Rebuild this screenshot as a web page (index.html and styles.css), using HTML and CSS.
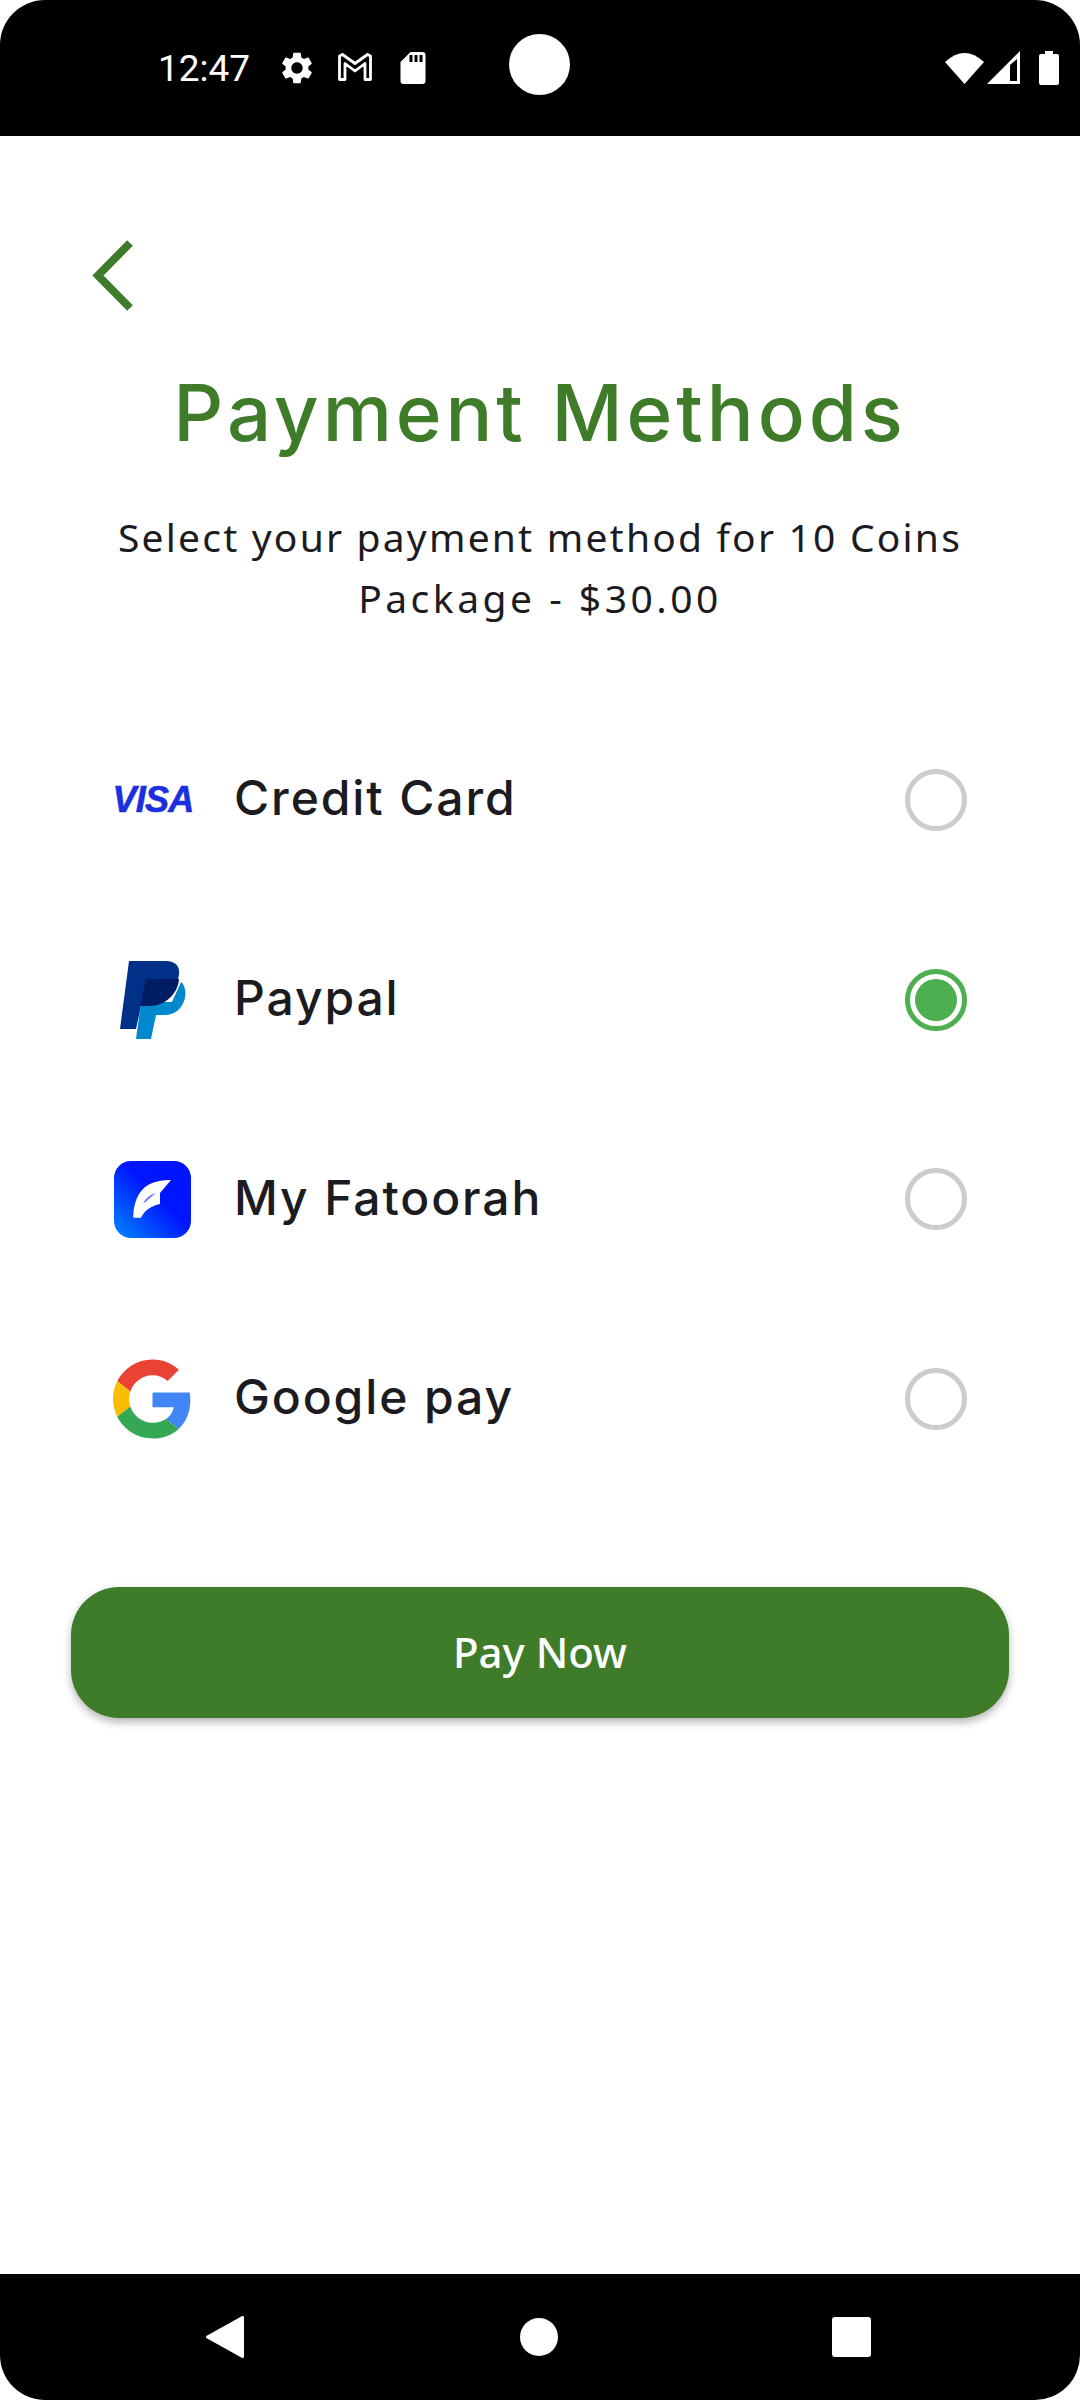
FILE: index.html
```html
<!DOCTYPE html>
<html lang="en">
<head>
<meta charset="utf-8">
<title>Payment Methods</title>
<link rel="stylesheet" href="styles.css">
</head>
<body>
<div class="screen">
  <header class="status">
    <span class="time">12:47</span>
    <svg class="ic-gear" viewBox="0 0 24 24"><path fill="#fff" d="M19.14 12.94c.04-.3.06-.61.06-.94 0-.32-.02-.64-.07-.94l2.03-1.58c.18-.14.23-.41.12-.61l-1.92-3.32c-.12-.22-.37-.29-.59-.22l-2.39.96c-.5-.38-1.03-.7-1.62-.94l-.36-2.54c-.04-.24-.24-.41-.48-.41h-3.84c-.24 0-.43.17-.47.41l-.36 2.54c-.59.24-1.13.57-1.62.94l-2.39-.96c-.22-.08-.47 0-.59.22L2.74 8.87c-.12.21-.08.47.12.61l2.03 1.58c-.05.3-.09.63-.09.94s.02.64.07.94l-2.03 1.58c-.18.14-.23.41-.12.61l1.92 3.32c.12.22.37.29.59.22l2.39-.96c.5.38 1.03.7 1.62.94l.36 2.54c.05.24.24.41.48.41h3.84c.24 0 .44-.17.47-.41l.36-2.54c.59-.24 1.13-.56 1.62-.94l2.39.96c.22.08.47 0 .59-.22l1.92-3.32c.12-.22.07-.47-.12-.61l-2.01-1.58zM12 15.6c-1.98 0-3.6-1.62-3.6-3.6s1.62-3.6 3.6-3.6 3.6 1.62 3.6 3.6-1.62 3.6-3.6 3.6z"/></svg>
    <svg class="ic-mail" viewBox="0 0 34 28"><path fill="none" stroke="#fff" stroke-width="2.800" stroke-linejoin="round" d="M1.500 3 L4.500 1.500 L17 10.500 L29.500 1.500 L32.500 3 V26.500 H27 V10.500 L17 18 L7 10.500 V26.500 H1.500 Z"/></svg>
    <svg class="ic-sd" viewBox="0 0 25 32"><path fill="#fff" fill-rule="evenodd" d="M10 0 H22 Q25 0 25 3 V29 Q25 32 22 32 H3 Q0 32 0 29 V10 Z M9 3 V10 H12 V3 Z M14 3 V10 H17 V3 Z M19 3 V10 H22 V3 Z"/></svg>
    <span class="spacer"></span>
    <svg class="ic-wifi" viewBox="0 0 39 33"><path fill="#fff" d="M0 11 Q19.500 -7 39 11 L19.500 33 Z"/></svg>
    <svg class="ic-signal" viewBox="0 0 33 33"><path fill="#fff" fill-rule="evenodd" d="M33 0 V33 H0 Z M30 8 L23 14 V30 H30 Z"/></svg>
    <svg class="ic-batt" viewBox="0 0 20 34"><path fill="#fff" d="M6 0 H14 V3 H18 Q20 3 20 5 V32 Q20 34 18 34 H2 Q0 34 0 32 V5 Q0 3 2 3 H6 Z"/></svg>
    <span class="camera"></span>
  </header>

  <main class="content">
    <svg class="back" viewBox="0 0 42 72"><path fill="none" stroke="#3f7c2a" stroke-width="8" d="M38 3 L6 35.500 L38 68"/></svg>
    <h1 class="title">Payment Methods</h1>
    <p class="subtitle">Select your payment method for 10 Coins<br><span class="subtitle-price">Package - $30.00</span></p>

    <ul class="methods">
      <li class="method">
        <span class="logo"><span class="visa">VISA</span></span>
        <span class="label">Credit Card</span>
        <span class="radio"></span>
      </li>
      <li class="method">
        <span class="logo">
          <svg viewBox="0 0 80 80"><path fill="#003087" d="M17 1 H54 C63 1 68 6 67 14 C65 32 52 46 36 46 H29 L24 69 H8 Z"/><path fill="#0088cf" d="M69 22 C73 25 74 31 73 38 C70 49 63 55 52 55 H44 L39 79 H24 L29 42 H60 Z"/><path fill="#001c64" d="M34 19 H67 C66 33 54 46 37 46 H28 Z"/></svg>
        </span>
        <span class="label">Paypal</span>
        <span class="radio radio-on"><span class="radio-dot"></span></span>
      </li>
      <li class="method">
        <span class="logo">
          <svg viewBox="0 0 80 80">
            <defs><linearGradient id="mf" x1="0" y1="1" x2="1" y2="0"><stop offset="0" stop-color="#0088ff"/><stop offset=".55" stop-color="#0016ff"/><stop offset="1" stop-color="#0014ff"/></linearGradient></defs>
            <rect x="2" y="2" width="77" height="77" rx="17" fill="url(#mf)"/>
            <path fill="#fff" d="M21.300 58.700 C21 45 26 32 36 26 C43 22 52 21 59 21 L48 34 V45 C39 47 33 51 29 58.700 Z"/>
            <path fill="#0016ff" opacity=".55" d="M31 45 C33 40 37 36 44 34 C39 38 36 41 31 45 Z"/>
          </svg>
        </span>
        <span class="label">My Fatoorah</span>
        <span class="radio"></span>
      </li>
      <li class="method">
        <span class="logo logo-google">
          <svg viewBox="0 0 48 48"><path fill="#EA4335" d="M24 9.5c3.54 0 6.71 1.22 9.21 3.6l6.85-6.85C35.9 2.38 30.47 0 24 0 14.62 0 6.51 5.38 2.56 13.22l7.98 6.19C12.43 13.72 17.74 9.5 24 9.5z"/><path fill="#4285F4" d="M46.98 24.55c0-1.57-.15-3.09-.38-4.55H24v9.02h12.94c-.58 2.96-2.26 5.48-4.78 7.18l7.73 6c4.51-4.18 7.09-10.36 7.09-17.65z"/><path fill="#FBBC05" d="M10.53 28.59c-.48-1.45-.76-2.99-.76-4.59s.27-3.14.76-4.59l-7.98-6.19C.92 16.46 0 20.12 0 24c0 3.88.92 7.54 2.56 10.78l7.97-6.19z"/><path fill="#34A853" d="M24 48c6.48 0 11.93-2.13 15.89-5.81l-7.73-6c-2.15 1.45-4.92 2.3-8.16 2.3-6.26 0-11.57-4.22-13.47-9.91l-7.98 6.19C6.51 42.62 14.62 48 24 48z"/></svg>
        </span>
        <span class="label">Google pay</span>
        <span class="radio"></span>
      </li>
    </ul>

    <button class="pay" type="button">Pay Now</button>
  </main>

  <footer class="nav">
    <svg class="nav-back" viewBox="0 0 38 42"><path fill="#fff" stroke="#fff" stroke-width="3" stroke-linejoin="round" d="M36.500 1.500 V40.500 L1.500 21 Z"/></svg>
    <span class="nav-home"></span>
    <span class="nav-recent"></span>
  </footer>
</div>
</body>
</html>
```

FILE: styles.css
```css
* { box-sizing: border-box; }
html, body { margin: 0; padding: 0; background: #fff; }
.screen {
  width: 1080px;
  height: 2400px;
  display: flex;
  flex-direction: column;
  overflow: hidden;
  background: #fff;
}
.status {
  position: relative;
  height: 136px;
  flex: none;
  background: #000;
  border-radius: 45px 45px 0 0;
  display: flex;
  align-items: flex-start;
  padding: 0 21px 0 158px;
}
.time {
  font: 400 37px/43px Roboto, sans-serif;
  color: #fff;
  margin-top: 47px;
  width: 91px;
  white-space: nowrap;
}
.ic-gear { width: 38px; height: 38px; margin: 49px 0 0 29px; }
.ic-mail { width: 36px; height: 28px; margin: 53px 0 0 21px; }
.ic-sd { width: 26px; height: 32px; margin: 52px 0 0 27px; }
.spacer { flex: 1; }
.ic-wifi { width: 39px; height: 33px; margin-top: 51px; }
.ic-signal { width: 33px; height: 33px; margin: 51px 0 0 3px; }
.ic-batt { width: 20px; height: 34px; margin: 51px 0 0 19px; }
.camera {
  position: absolute;
  left: 509px;
  top: 34px;
  width: 61px;
  height: 61px;
  border-radius: 50%;
  background: #fff;
}
.content {
  flex: 1;
  display: flex;
  flex-direction: column;
  padding: 104px 71px 0;
}
.back { width: 42px; height: 72px; display: block; margin-left: 21px; flex: none; }
.title {
  margin: 45px 0 0;
  text-align: center;
  font: 500 78px/112px Inter, sans-serif;
  letter-spacing: 3.9px;
  color: #3f7c2a;
  white-space: nowrap;
}
.subtitle {
  margin: 37px 0 0;
  text-align: center;
  font: 400 39px/61px "Noto Sans", sans-serif;
  letter-spacing: 2.2px;
  color: #1c1b1f;
  white-space: nowrap;
}
.subtitle-price { letter-spacing: 3.5px; }
.methods {
  list-style: none;
  margin: 72px 0 0;
  padding: 0 42px 0 41px;
  display: flex;
  flex-direction: column;
}
.method {
  height: 199.700px;
  display: flex;
  align-items: center;
}
.logo {
  width: 80px;
  height: 80px;
  flex: none;
  display: flex;
  align-items: center;
  justify-content: center;
}
.logo svg { width: 80px; height: 80px; display: block; }
.logo-google { padding-left: 1px; }
.visa {
  font: italic 700 36px/1 "Liberation Sans", sans-serif;
  letter-spacing: -0.8px;
  color: #1b2fe0;
  padding-left: 2px;
  -webkit-text-stroke: 0.6px #1b2fe0;
}
.label {
  flex: 1;
  margin-left: 42px;
  padding-bottom: 3px;
  font: 500 48px/60px Inter, sans-serif;
  letter-spacing: 1.9px;
  color: #1c1b1f;
}
.radio {
  width: 62px;
  height: 62px;
  flex: none;
  border: 5px solid #cccccc;
  border-radius: 50%;
  display: flex;
  align-items: center;
  justify-content: center;
}
.radio-on { border-color: #4caf50; }
.radio-dot { width: 42px; height: 42px; border-radius: 50%; background: #4caf50; }
.pay {
  margin-top: 88px;
  height: 131px;
  border: 0;
  border-radius: 48px;
  background: #3f7c2a;
  color: #fff;
  font: 500 42px/1 "Noto Sans", sans-serif;
  box-shadow: 0 4px 8px rgba(0, 0, 0, .3);
}
.nav {
  height: 126px;
  flex: none;
  background: #000;
  border-radius: 0 0 45px 45px;
  display: flex;
  align-items: center;
  justify-content: space-between;
  padding: 0 209px 0 206px;
}
.nav-back { width: 38px; height: 42px; }
.nav-home { width: 38px; height: 38px; border-radius: 50%; background: #fff; margin-left: 2px; }
.nav-recent { width: 39px; height: 40px; border-radius: 3px; background: #fff; }
```
